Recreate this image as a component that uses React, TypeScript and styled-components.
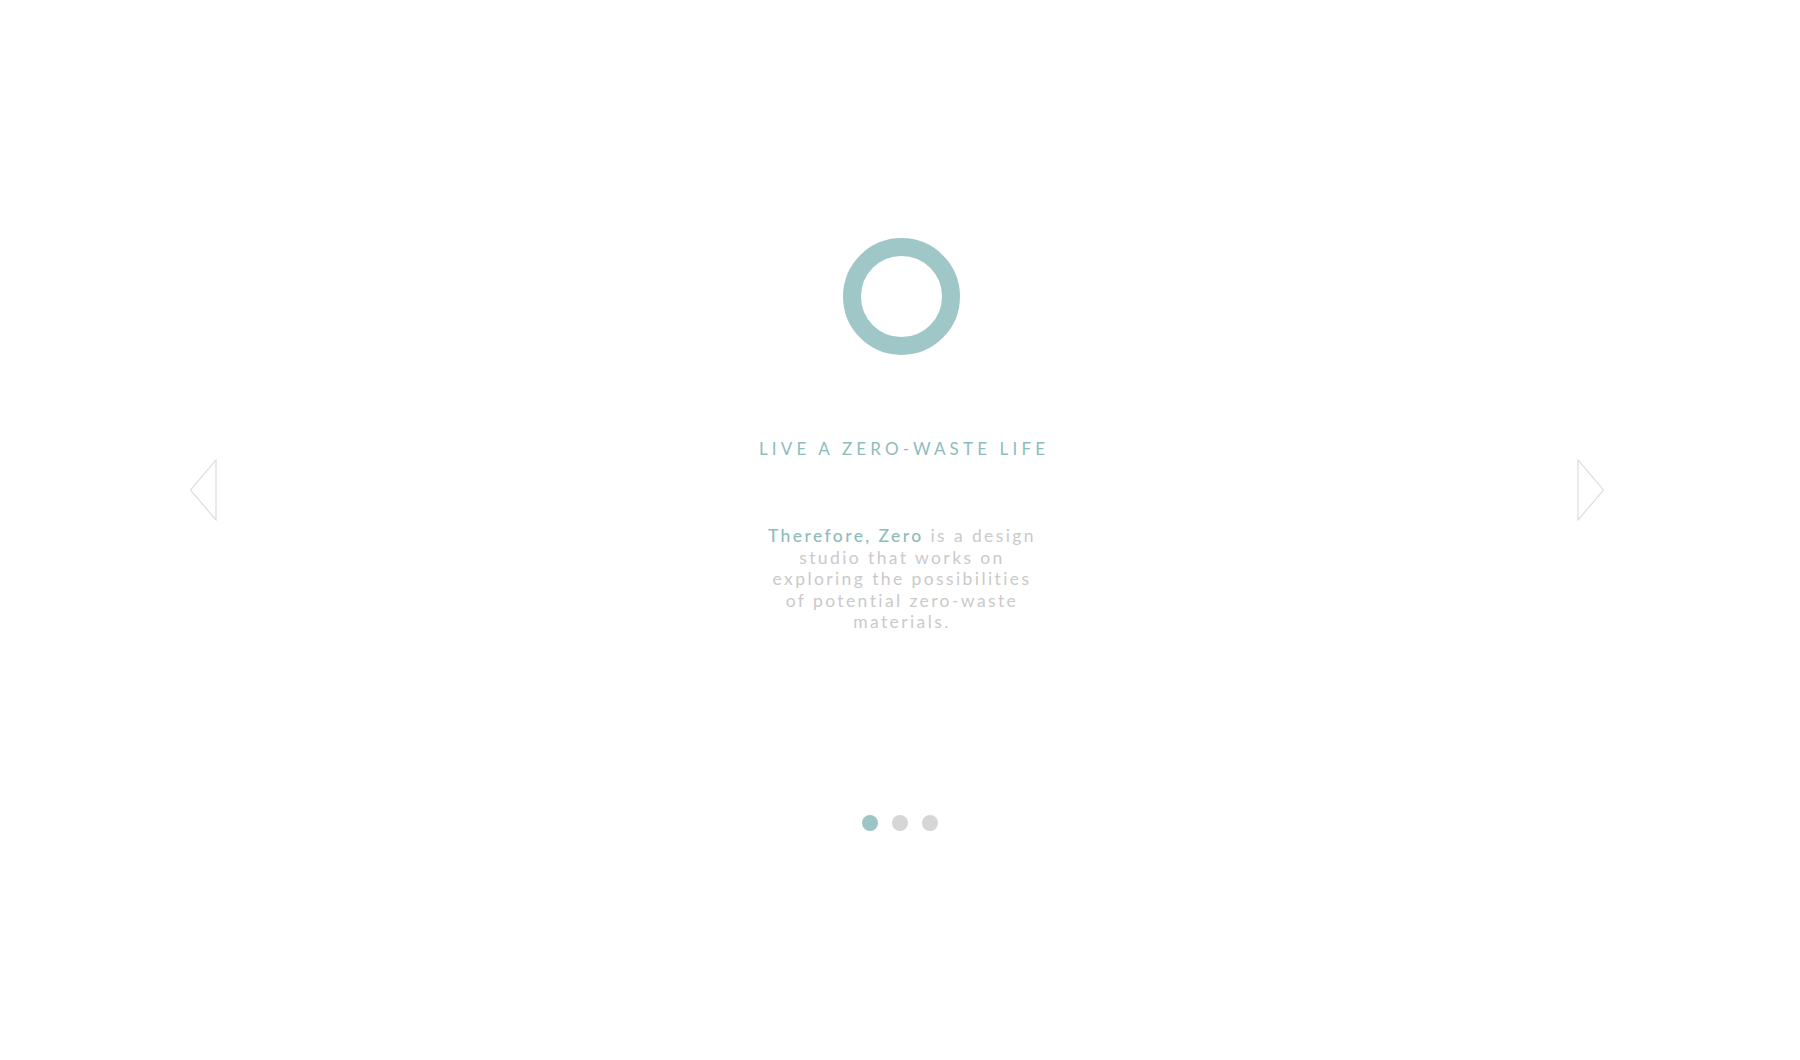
import React from "react";
import styled, { createGlobalStyle } from "styled-components";

const Global = createGlobalStyle`
  html, body { margin: 0; padding: 0; background: #ffffff; }
  body { font-family: "Lato", "Noto Sans", sans-serif; }
`;

const Page = styled.main`
  width: 1800px;
  height: 1060px;
  display: flex;
  flex-direction: column;
  align-items: center;
  background: #ffffff;
`;

const Carousel = styled.section`
  width: 100%;
  box-sizing: border-box;
  margin-top: 180px;
  padding: 0 189px;
  display: grid;
  grid-template-columns: 1fr auto 1fr;
  align-items: center;
`;

const ArrowButton = styled.button<{ $side: "left" | "right" }>`
  background: none;
  border: 0;
  padding: 0;
  width: 28px;
  height: 62px;
  cursor: pointer;
  display: flex;
  align-items: center;
  justify-content: center;
  justify-self: ${(p) => (p.$side === "left" ? "start" : "end")};
  margin-right: ${(p) => (p.$side === "right" ? "6px" : "0")};
`;

const Slide = styled.div`
  height: 620px;
  box-sizing: border-box;
  padding: 58px 0 0 4px;
  display: flex;
  flex-direction: column;
  align-items: center;
`;

const Ring = styled.div`
  width: 117px;
  height: 117px;
  border-radius: 50%;
  box-sizing: border-box;
  border: 18.5px solid #a0c7c8;
`;

const Title = styled.h1`
  margin: 84px 0 0;
  font-family: "Lato", "Noto Sans", sans-serif;
  font-weight: 400;
  font-size: 17px;
  line-height: 20px;
  letter-spacing: 4.15px;
  color: #8dbcbd;
  text-transform: uppercase;
  text-align: center;
  padding-left: 4.15px;
`;

const Text = styled.p`
  margin: 66px 0 0;
  font-family: "Lato", "Noto Sans", sans-serif;
  font-weight: 400;
  font-size: 17.5px;
  line-height: 21.6px;
  letter-spacing: 2.4px;
  color: #cacaca;
  text-align: center;
`;

const Brand = styled.span`
  color: #8dbcbd;
  font-weight: 500;
`;

const Dots = styled.div`
  margin-top: 15px;
  display: flex;
  gap: 14px;
`;

const Dot = styled.span<{ $active?: boolean }>`
  width: 16px;
  height: 16px;
  border-radius: 50%;
  background: ${(p) => (p.$active ? "#9dc5c6" : "#d6d6d6")};
`;

const Arrow = ({ dir }: { dir: "left" | "right" }) => (
  <svg width="28" height="62" viewBox="0 0 28 62">
    {dir === "left" ? (
      <polygon points="27,1 27,61 1.5,31" fill="none" stroke="#d9d9d6" strokeWidth="1.1" />
    ) : (
      <polygon points="1,1 1,61 26.5,31" fill="none" stroke="#d9d9d6" strokeWidth="1.1" />
    )}
  </svg>
);

export default function App() {
  return (
    <>
      <Global />
      <Page>
        <Carousel>
          <ArrowButton $side="left" aria-label="Previous">
            <Arrow dir="left" />
          </ArrowButton>
          <Slide>
            <Ring />
            <Title>Live a zero-waste life</Title>
            <Text>
              <Brand>Therefore, Zero</Brand> is a design
              <br />
              studio that works on
              <br />
              exploring the possibilities
              <br />
              of potential zero-waste
              <br />
              materials.
            </Text>
          </Slide>
          <ArrowButton $side="right" aria-label="Next">
            <Arrow dir="right" />
          </ArrowButton>
        </Carousel>
        <Dots>
          <Dot $active />
          <Dot />
          <Dot />
        </Dots>
      </Page>
    </>
  );
}
